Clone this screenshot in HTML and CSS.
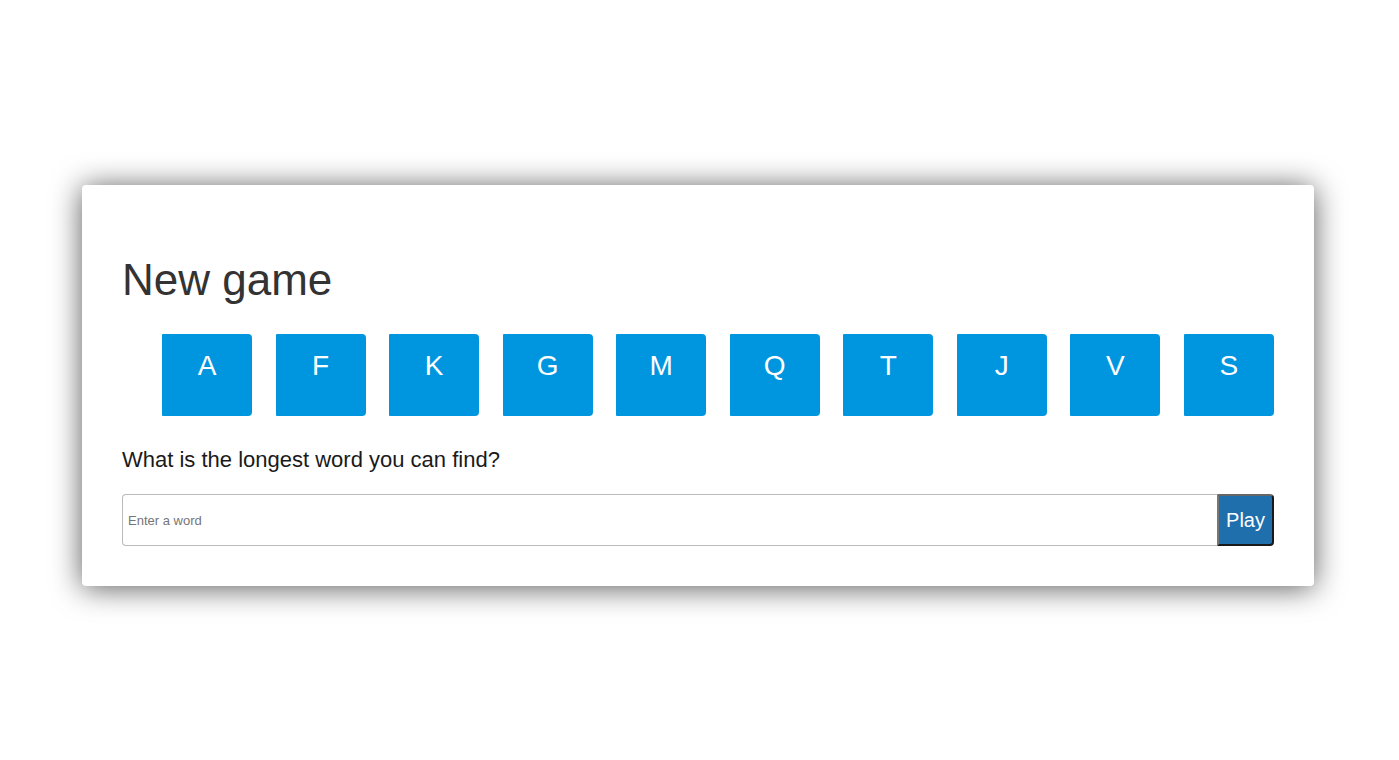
FILE: index.html
```html
<!DOCTYPE html>
<html>
<head>
<meta charset="utf-8">
<link rel="stylesheet" href="styles.css">
</head>
<body>
<main class="page">
  <section class="card">
    <h1 class="title">New game</h1>
    <ul class="letters">
      <li class="tile">A</li>
      <li class="tile">F</li>
      <li class="tile">K</li>
      <li class="tile">G</li>
      <li class="tile">M</li>
      <li class="tile">Q</li>
      <li class="tile">T</li>
      <li class="tile">J</li>
      <li class="tile">V</li>
      <li class="tile">S</li>
    </ul>
    <p class="question">What is the longest word you can find?</p>
    <form class="entry">
      <input class="word" type="text" placeholder="Enter a word">
      <button class="play" type="button">Play</button>
    </form>
  </section>
</main>
</body>
</html>
```

FILE: styles.css
```css
html, body {
  margin: 0;
  padding: 0;
  background: #ffffff;
  font-family: "Liberation Sans", Arial, sans-serif;
}

.page {
  padding: 185px 85px 174px 82px;
}

.card {
  width: 1152px;
  padding: 40px;
  background: #ffffff;
  border-radius: 4px;
  box-shadow: 0 2px 30px rgba(0, 0, 0, 0.65);
}

.title {
  margin: 29px 0 0;
  font-size: 44px;
  font-weight: normal;
  color: #333333;
  line-height: 51px;
}

.letters {
  list-style: none;
  margin: 29px 0 0;
  padding: 0 0 0 40px;
  display: flex;
  justify-content: space-between;
}

.tile {
  width: 90px;
  height: 82px;
  box-sizing: border-box;
  padding-top: 16px;
  background: #0096df;
  color: #ffffff;
  font-size: 28px;
  line-height: 32px;
  text-align: center;
  border-radius: 1px 4px 4px 1px;
}

.question {
  margin: 31px 0 0;
  font-size: 22px;
  line-height: 25px;
  color: #1a1a1a;
}

.entry {
  margin-top: 22px;
  display: flex;
  height: 52px;
}

.word {
  flex: 1;
  margin: 0;
  padding: 0 5px;
  border: 1px solid #bbbbbb;
  border-right: none;
  border-radius: 4px 0 0 4px;
  font-family: "Liberation Sans", Arial, sans-serif;
  font-size: 13px;
  color: #333;
  outline: none;
}

.word::placeholder {
  color: #757575;
}

.play {
  width: 57px;
  margin: 0;
  padding: 0;
  background: #1f6fad;
  color: #ffffff;
  font-family: "Liberation Sans", Arial, sans-serif;
  font-size: 20px;
  border-style: solid;
  border-width: 2px;
  border-color: #666666 #1a1a1a #1a1a1a #777777;
  border-radius: 0 4px 4px 0;
}
```
